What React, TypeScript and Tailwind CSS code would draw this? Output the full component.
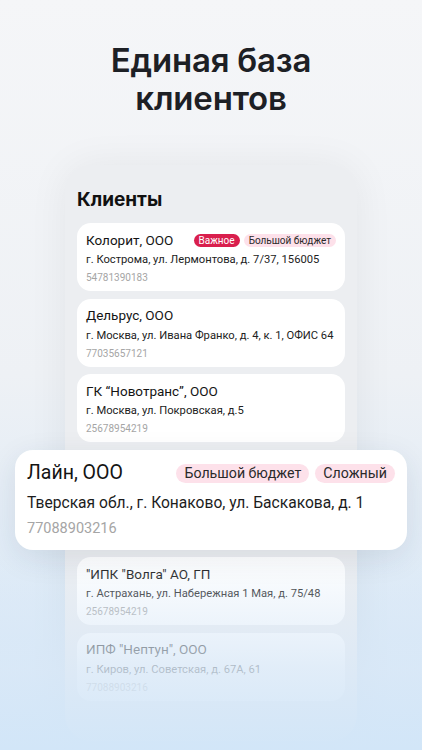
import React from 'react';

interface Client {
    name: string;
    address: string;
    inn: string;
    tags?: { label: string; strong?: boolean }[];
}

const clients: Client[] = [
    {
        name: 'Колорит, ООО',
        address: 'г. Кострома, ул. Лермонтова, д. 7/37, 156005',
        inn: '54781390183',
        tags: [{ label: 'Важное', strong: true }, { label: 'Большой бюджет' }],
    },
    { name: 'Дельрус, ООО', address: 'г. Москва, ул. Ивана Франко, д. 4, к. 1, ОФИС 64', inn: '77035657121' },
    { name: 'ГК “Новотранс”, ООО', address: 'г. Москва, ул. Покровская, д.5', inn: '25678954219' },
];

const after: Client[] = [
    { name: '"ИПК "Волга" АО, ГП', address: 'г. Астрахань, ул. Набережная 1 Мая, д. 75/48', inn: '25678954219' },
    { name: 'ИПФ "Нептун", ООО', address: 'г. Киров, ул. Советская, д. 67А, 61', inn: '77088903216' },
];

function ClientCard({ client }: { client: Client }) {
    return (
        <div className="h-[68px] shrink-0 whitespace-nowrap rounded-[14px] bg-white px-[9px] pt-[7px]">
            <div className="flex h-[20px] items-center justify-between">
                <span className="text-[13.5px] text-[#141414]">{client.name}</span>
                {client.tags && (
                    <div className="flex gap-[4px]">
                        {client.tags.map((t) => (
                            <span
                                key={t.label}
                                className={`rounded-full px-[5px] text-[10px] leading-[13px] ${t.strong ? 'bg-[#d91f4d] text-white' : 'bg-[#fde1ea] text-[#2a2a2a]'}`}
                            >
                                {t.label}
                            </span>
                        ))}
                    </div>
                )}
            </div>
            <div className="text-[11.2px] leading-[19px] text-[#222]">{client.address}</div>
            <div className="text-[10px] leading-[17px] text-[#a5a5a5]">{client.inn}</div>
        </div>
    );
}

export default function App() {
    return (
        <div
            className="relative flex h-[750px] w-full flex-col items-center overflow-hidden bg-gradient-to-b from-[#f5f6f8] via-[#eef1f5] via-50% to-[#d2e6f8]"
            style={{ fontFamily: 'Roboto, "Noto Sans", sans-serif' }}
        >
            <h1
                className="pt-[41px] text-center text-[33px] font-semibold leading-[38px] tracking-[-0.2px] text-[#1d2025]"
                style={{ fontFamily: 'Inter, sans-serif' }}
            >
                Единая база
                <br />
                клиентов
            </h1>

            <div className="mt-[48px] w-[292px] rounded-[26px] bg-[#eceef1] px-3 pt-[22px] pb-10 shadow-[0_0_40px_rgba(0,0,0,0.06)]">
                <div className="text-[19px] font-bold leading-[26px] text-[#111]" style={{ fontFamily: 'Inter, sans-serif' }}>
                    Клиенты
                </div>
                <div className="mt-[10px] flex flex-col gap-[7.5px]">
                    {clients.map((c) => (
                        <ClientCard key={c.name} client={c} />
                    ))}

                    <div className="relative z-20 -mx-[62px] h-[100px] whitespace-nowrap rounded-[18px] bg-white px-[12px] pt-[11px] shadow-[0_8px_30px_rgba(30,50,80,0.10)]">
                        <div className="flex h-[25px] items-center justify-between">
                            <span className="text-[19.5px] text-[#141414]">Лайн, ООО</span>
                            <div className="flex gap-[6px]">
                                <span className="rounded-full bg-[#fde1ea] px-[8px] text-[14.2px] leading-[19px] text-[#2a2a2a]">Большой бюджет</span>
                                <span className="rounded-full bg-[#fde1ea] px-[8px] text-[14.2px] leading-[19px] text-[#2a2a2a]">Сложный</span>
                            </div>
                        </div>
                        <div className="mt-[4px] text-[15.6px] leading-[26px] text-[#1c1c1c]">Тверская обл., г. Конаково, ул. Баскакова, д. 1</div>
                        <div className="text-[14.5px] leading-[26px] text-[#a5a5a5]">77088903216</div>
                    </div>

                    {after.map((c) => (
                        <ClientCard key={c.name} client={c} />
                    ))}
                </div>
            </div>

            <div className="pointer-events-none absolute inset-x-0 top-[553px] bottom-0 z-10 bg-gradient-to-b from-[#dde9f5]/0 via-[#d9e8f7]/80 via-60% to-[#d2e6f8]" />
        </div>
    );
}
